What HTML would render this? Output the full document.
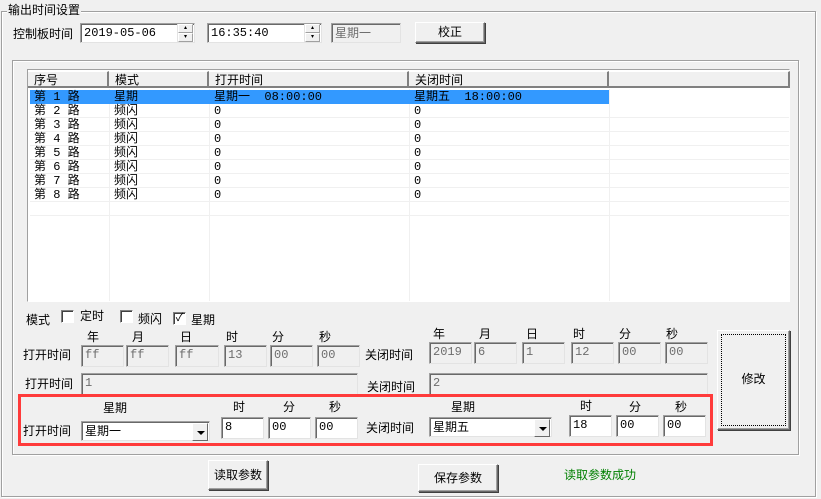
<!DOCTYPE html>
<html><head><meta charset="utf-8"><style>
*{margin:0;padding:0;box-sizing:border-box}
body{width:821px;height:499px;background:#f0f0f0;position:relative;overflow:hidden;font-family:"Liberation Sans","WenQuanYi Zen Hei","Noto Sans CJK SC",sans-serif;font-size:12px;color:#000}
.a{position:absolute;white-space:nowrap;line-height:14px}
.grp{position:absolute;border:1px solid #a0a0a0;box-shadow:inset 1px 1px 0 #fff,1px 1px 0 #fff}
.in{position:absolute;background:#fff;border:1px solid;border-color:#a0a0a0 #e3e3e3 #e3e3e3 #a0a0a0;box-shadow:inset 1px 1px 0 #696969;padding:2px 0 0 3px;line-height:14px;font-family:"Liberation Mono","WenQuanYi Zen Hei",monospace}
.dis{background:#f0f0f0;color:#6d6d6d}
.btn{position:absolute;background:#f0f0f0;border:1px solid;border-color:#fff #696969 #696969 #fff;box-shadow:1px 1px 0 #404040 ,inset -1px -1px 0 #a0a0a0;text-align:center}
.cb{position:absolute;width:13px;height:13px;background:#fff;border:1px solid;border-color:#808080 #fff #fff #808080;box-shadow:inset 1px 1px 0 #404040}
.list{position:absolute;left:27px;top:69px;width:763px;height:233px;background:#fff;border:1px solid;border-color:#a0a0a0 #fff #fff #a0a0a0}
.hd{position:absolute;top:1px;height:17px;background:#f0f0f0;border-right:2px solid #808080;border-bottom:2px solid #808080;border-top:1px solid #fff;padding:1px 0 0 6px;line-height:14px}
.row{position:absolute;left:2px;width:759px;height:14px;border-bottom:1px solid #f0f0f0}
.vl{position:absolute;top:19px;bottom:0;width:1px;background:#f0f0f0}
.c{position:absolute;top:0;line-height:14px;white-space:pre;font-family:"Liberation Mono","WenQuanYi Zen Hei",monospace}
.sel{background:#3399ff}
.spin{position:absolute;width:16px;height:18px;border-left:1px solid #e3e3e3}
.spin div{height:9px;border:1px solid;border-color:#fff #a0a0a0 #a0a0a0 #fff;background:#f0f0f0;font-size:6px;line-height:6px;text-align:center}
.combo{position:absolute;background:#fff;border:1px solid;border-color:#a0a0a0 #e3e3e3 #e3e3e3 #a0a0a0;box-shadow:inset 1px 1px 0 #696969;padding:2px 0 0 3px;line-height:14px}
.dd{position:absolute;right:1px;top:1px;width:16px;height:18px;background:#f0f0f0;border:1px solid;border-color:#fff #696969 #696969 #fff}
.dd:after{content:"";position:absolute;left:4px;top:7px;border-left:4px solid transparent;border-right:4px solid transparent;border-top:4px solid #000}
</style></head><body>
<div class="grp" style="left:1px;top:11px;width:815px;height:486px"></div>
<div class="a" style="left:7px;top:3px;background:#f0f0f0;padding:0 1px">输出时间设置</div>
<div class="a" style="left:13px;top:27px">控制板时间</div>
<div class="in" style="left:80px;top:23px;width:115px;height:20px;padding-top:2px">2019-05-06</div>
<div class="spin" style="left:177px;top:24px"><div>▴</div><div>▾</div></div>
<div class="in" style="left:207px;top:23px;width:115px;height:20px">16:35:40</div>
<div class="spin" style="left:304px;top:24px"><div>▴</div><div>▾</div></div>
<div class="in dis" style="left:331px;top:23px;width:70px;height:20px;font-family:'WenQuanYi Zen Hei',sans-serif">星期一</div>
<div class="btn" style="left:415px;top:22px;width:70px;height:21px;line-height:19px">校正</div>

<div class="grp" style="left:12px;top:60px;width:787px;height:395px"></div>
<div class="list">
 <div class="hd" style="left:0;width:81px">序号</div>
 <div class="hd" style="left:81px;width:100px">模式</div>
 <div class="hd" style="left:181px;width:200px">打开时间</div>
 <div class="hd" style="left:381px;width:200px">关闭时间</div>
 <div class="hd" style="left:581px;width:181px"></div>
 <div class="vl" style="left:81px"></div><div class="vl" style="left:181px"></div><div class="vl" style="left:381px"></div><div class="vl" style="left:581px"></div>
 <div class="row" style="top:20px;border:none;width:579px" ><div class="sel" style="position:absolute;left:0;top:0;width:579px;height:14px"></div></div>
 <div class="row" style="top:20px;border:none"><span class="c" style="left:4px">第 1 路</span><span class="c" style="left:84px">星期</span><span class="c" style="left:184px">星期一  08:00:00</span><span class="c" style="left:384px">星期五  18:00:00</span></div>
 <div class="row" style="top:34px"><span class="c" style="left:4px">第 2 路</span><span class="c" style="left:84px">频闪</span><span class="c" style="left:184px">0</span><span class="c" style="left:384px">0</span></div>
 <div class="row" style="top:48px"><span class="c" style="left:4px">第 3 路</span><span class="c" style="left:84px">频闪</span><span class="c" style="left:184px">0</span><span class="c" style="left:384px">0</span></div>
 <div class="row" style="top:62px"><span class="c" style="left:4px">第 4 路</span><span class="c" style="left:84px">频闪</span><span class="c" style="left:184px">0</span><span class="c" style="left:384px">0</span></div>
 <div class="row" style="top:76px"><span class="c" style="left:4px">第 5 路</span><span class="c" style="left:84px">频闪</span><span class="c" style="left:184px">0</span><span class="c" style="left:384px">0</span></div>
 <div class="row" style="top:90px"><span class="c" style="left:4px">第 6 路</span><span class="c" style="left:84px">频闪</span><span class="c" style="left:184px">0</span><span class="c" style="left:384px">0</span></div>
 <div class="row" style="top:104px"><span class="c" style="left:4px">第 7 路</span><span class="c" style="left:84px">频闪</span><span class="c" style="left:184px">0</span><span class="c" style="left:384px">0</span></div>
 <div class="row" style="top:118px"><span class="c" style="left:4px">第 8 路</span><span class="c" style="left:84px">频闪</span><span class="c" style="left:184px">0</span><span class="c" style="left:384px">0</span></div>
 <div class="row" style="top:132px"></div>
</div>

<div class="a" style="left:26px;top:313px">模式</div>
<div class="cb" style="left:61px;top:310px"></div><div class="a" style="left:80px;top:309px">定时</div>
<div class="cb" style="left:120px;top:310px"></div><div class="a" style="left:138px;top:312px">频闪</div>
<div class="cb" style="left:173px;top:312px;font-size:11px;line-height:11px;text-align:center">✓</div><div class="a" style="left:191px;top:313px">星期</div>

<div class="a" style="left:87px;top:330px">年</div><div class="a" style="left:132px;top:330px">月</div><div class="a" style="left:180px;top:330px">日</div><div class="a" style="left:226px;top:330px">时</div><div class="a" style="left:272px;top:330px">分</div><div class="a" style="left:319px;top:330px">秒</div>
<div class="a" style="left:23px;top:348px">打开时间</div>
<div class="in dis" style="left:81px;top:345px;width:43px;height:22px">ff</div>
<div class="in dis" style="left:126px;top:345px;width:43px;height:22px">ff</div>
<div class="in dis" style="left:175px;top:345px;width:44px;height:22px">ff</div>
<div class="in dis" style="left:224px;top:345px;width:43px;height:22px">13</div>
<div class="in dis" style="left:270px;top:345px;width:43px;height:22px">00</div>
<div class="in dis" style="left:317px;top:345px;width:43px;height:22px">00</div>
<div class="a" style="left:365px;top:348px">关闭时间</div>
<div class="a" style="left:433px;top:327px">年</div><div class="a" style="left:479px;top:327px">月</div><div class="a" style="left:526px;top:327px">日</div><div class="a" style="left:573px;top:327px">时</div><div class="a" style="left:619px;top:327px">分</div><div class="a" style="left:666px;top:327px">秒</div>
<div class="in dis" style="left:429px;top:342px;width:43px;height:22px">2019</div>
<div class="in dis" style="left:474px;top:342px;width:43px;height:22px">6</div>
<div class="in dis" style="left:522px;top:342px;width:43px;height:22px">1</div>
<div class="in dis" style="left:571px;top:342px;width:43px;height:22px">12</div>
<div class="in dis" style="left:618px;top:342px;width:43px;height:22px">00</div>
<div class="in dis" style="left:665px;top:342px;width:43px;height:22px">00</div>

<div class="a" style="left:25px;top:377px">打开时间</div>
<div class="in dis" style="left:81px;top:373px;width:277px;height:22px">1</div>
<div class="a" style="left:367px;top:380px">关闭时间</div>
<div class="in dis" style="left:429px;top:373px;width:279px;height:22px">2</div>

<div class="btn" style="left:717px;top:330px;width:73px;height:100px;line-height:96px;border-color:#fff #696969 #696969 #fff">
<div style="position:absolute;left:3px;top:3px;right:3px;bottom:3px;border:1px dotted #000"></div>修改</div>

<div style="position:absolute;left:18px;top:394px;width:695px;height:52px;border:3px solid #ff3b3b"></div>
<div class="a" style="left:103px;top:401px">星期</div>
<div class="a" style="left:233px;top:400px">时</div><div class="a" style="left:283px;top:400px">分</div><div class="a" style="left:329px;top:400px">秒</div>
<div class="a" style="left:23px;top:424px">打开时间</div>
<div class="combo" style="left:81px;top:421px;width:129px;height:20px">星期一<div class="dd"></div></div>
<div class="in" style="left:221px;top:417px;width:43px;height:22px">8</div>
<div class="in" style="left:268px;top:417px;width:43px;height:22px">00</div>
<div class="in" style="left:315px;top:417px;width:43px;height:22px">00</div>
<div class="a" style="left:366px;top:421px">关闭时间</div>
<div class="a" style="left:451px;top:400px">星期</div>
<div class="a" style="left:580px;top:399px">时</div><div class="a" style="left:629px;top:400px">分</div><div class="a" style="left:675px;top:400px">秒</div>
<div class="combo" style="left:429px;top:417px;width:123px;height:20px">星期五<div class="dd"></div></div>
<div class="in" style="left:569px;top:415px;width:43px;height:22px">18</div>
<div class="in" style="left:616px;top:415px;width:43px;height:22px">00</div>
<div class="in" style="left:663px;top:415px;width:43px;height:22px">00</div>

<div class="btn" style="left:208px;top:460px;width:60px;height:30px;line-height:28px">读取参数</div>
<div class="btn" style="left:418px;top:464px;width:80px;height:28px;line-height:26px">保存参数</div>
<div class="a" style="left:564px;top:468px;color:#008000">读取参数成功</div>
</body></html>
